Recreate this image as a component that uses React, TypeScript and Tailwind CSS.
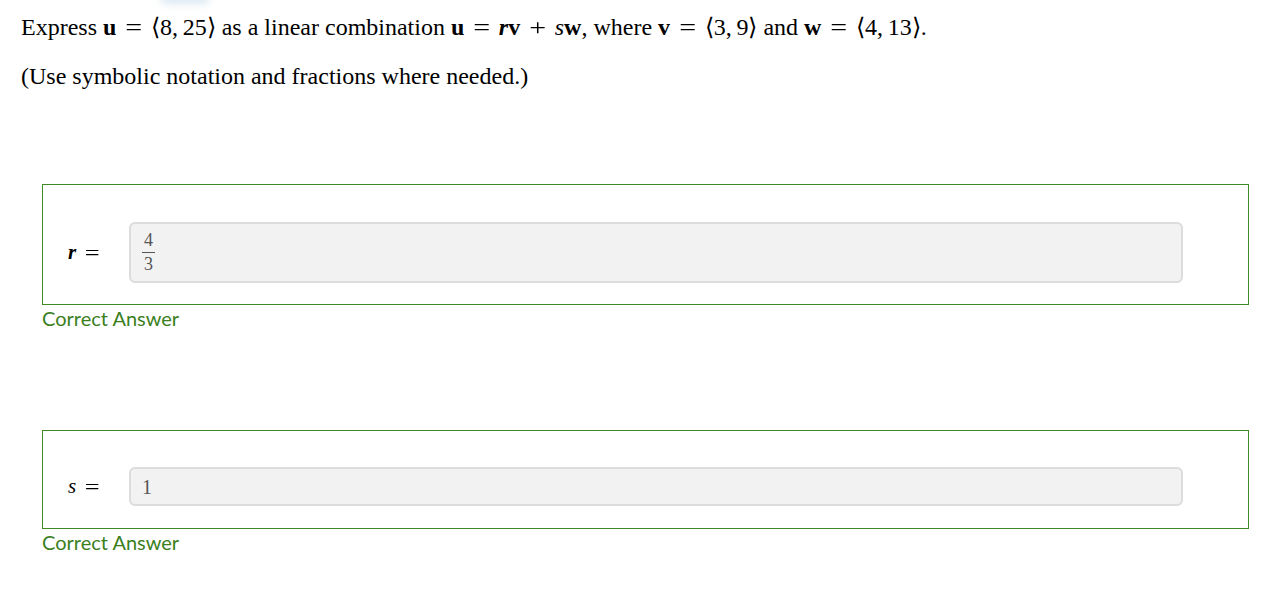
import React from "react";

const serif = { fontFamily: '"Liberation Serif", "Times New Roman", serif' };

function B({ children }: { children: React.ReactNode }) {
  return <span className="font-bold">{children}</span>;
}

function Op({ children }: { children: React.ReactNode }) {
  return <span className="mx-[10.5px] inline-block scale-x-[1.25]">{children}</span>;
}

export default function App() {
  return (
    <div className="relative min-h-[591px] w-full bg-white text-black" style={serif}>
      <div className="pointer-events-none absolute left-[160px] top-[-10px] h-[14px] w-[50px] rounded-full bg-[#dbe9f3] blur-[4px]" />
      <div className="px-[21px] pt-[12px]">
        <p className="whitespace-nowrap text-[24px] leading-[30px] font-['Liberation_Serif',serif]">
          Express <B>u</B><Op>=</Op>⟨8,&thinsp;25⟩ as a linear combination <B>u</B><Op>=</Op><i className="font-bold">r</i><B>v</B><Op>+</Op><i>s</i><B>w</B>, where <B>v</B><Op>=</Op>⟨3,&thinsp;9⟩ and <B>w</B><Op>=</Op>⟨4,&thinsp;13⟩.
        </p>
        <p className="mt-[19px] text-[24px] leading-[30px] font-['Liberation_Serif',serif]">
          (Use symbolic notation and fractions where needed.)
        </p>
      </div>

      <div className="ml-[42px] mr-[27px] mt-[93px]">
        <div className="flex items-center border border-[#3f8a26] pl-[25px] pt-[37px] pb-[21px] pr-[65px]">
          <div className="flex w-[61px] items-center text-[22px] font-['Liberation_Serif',serif]">
            <i className="font-bold text-[21px]">r</i>
            <span className="ml-[10px] inline-block scale-x-[1.2]">=</span>
          </div>
          <div className="flex h-[61px] flex-1 items-center rounded-[6px] border-2 border-[#dcdcdc] bg-[#f2f2f2] pl-[11px]">
            <div className="flex flex-col items-center text-[18px] leading-[17px] text-[#555] font-['Liberation_Serif',serif]">
              <span>4</span>
              <span className="my-[3px] h-px w-[13px] bg-[#555]" />
              <span>3</span>
            </div>
          </div>
        </div>
        <div className="mt-[2px] text-[20px] leading-[22px] text-[#3b7f1d] font-['Lato','Open_Sans',sans-serif]">
          Correct Answer
        </div>

        <div className="mt-[101px] flex items-center border border-[#3f8a26] pl-[25px] pt-[36px] pb-[22px] pr-[65px]">
          <div className="flex w-[61px] items-center text-[22px] font-['Liberation_Serif',serif]">
            <i className="text-[21px]">s</i>
            <span className="ml-[10px] inline-block scale-x-[1.2]">=</span>
          </div>
          <div className="flex h-[39px] flex-1 items-center rounded-[6px] border-2 border-[#dcdcdc] bg-[#f2f2f2] pl-[11px]">
            <span className="text-[20px] text-[#555] font-['Liberation_Serif',serif]">1</span>
          </div>
        </div>
        <div className="mt-[2px] text-[20px] leading-[22px] text-[#3b7f1d] font-['Lato','Open_Sans',sans-serif]">
          Correct Answer
        </div>
      </div>
    </div>
  );
}
